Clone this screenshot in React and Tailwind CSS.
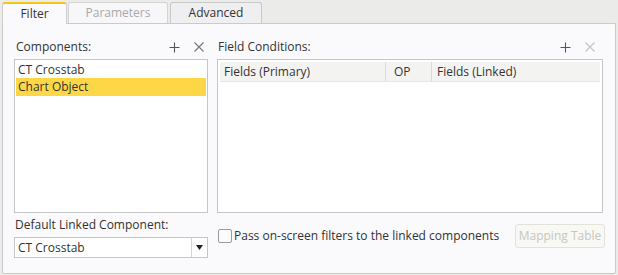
import React from 'react';

const FONT = { fontFamily: '"Open Sans", "Liberation Sans", sans-serif' };

const PlusIcon = ({ className }) => (
    <svg width="11" height="11" viewBox="0 0 11 11" className={className}>
        <path d="M5.5 0.5v10M0.5 5.5h10" stroke="currentColor" strokeWidth="1.1" fill="none" />
    </svg>
);

const CrossIcon = ({ className }) => (
    <svg width="10" height="10" viewBox="0 0 10 10" className={className}>
        <path d="M0.5 0.5l9 9M9.5 0.5l-9 9" stroke="currentColor" strokeWidth="1.1" fill="none" />
    </svg>
);

const App = () => {
    return (
        <div className="w-[618px] h-[275px] bg-[#ebece9] text-[12px] text-[#333] overflow-hidden" style={FONT}>
            {/* tabs */}
            <div className="flex items-end h-[23px] pl-[2px] gap-[1px]">
                <div className="w-[65px] h-[22px] bg-[#faf9fb] border-t-2 border-t-[#f5c518] border-x border-x-[#cfcfcf] rounded-t-[3px] flex items-center justify-center relative top-[1px]">
                    Filter
                </div>
                <div className="w-[100px] h-[21px] bg-[#f7f6f8] border border-b-0 border-[#d4d4d4] rounded-t-[3px] flex items-center justify-center text-[#a9a9a9]">
                    Parameters
                </div>
                <div className="w-[92px] h-[21px] ml-[1px] bg-[#efeef1] border border-b-0 border-[#c8c8c8] rounded-t-[3px] flex items-center justify-center text-[#333]">
                    Advanced
                </div>
            </div>

            {/* panel */}
            <div className="ml-[2px] w-[614px] h-[251px] bg-[#faf9fb] border border-[#cacaca] rounded-b-[2px] pt-[15px] px-[11px] flex gap-[9px]">
                {/* left column */}
                <div className="w-[194px] flex flex-col">
                    <div className="flex items-center h-[16px] pl-[2px] pr-[4px]">
                        <span className="flex-1">Components:</span>
                        <PlusIcon className="text-[#555] mr-[14px]" />
                        <CrossIcon className="text-[#777]" />
                    </div>
                    <div className="mt-[4px] h-[154px] bg-white border border-[#c6c6c6] p-[1px]">
                        <div className="h-[17px] leading-[17px] pl-[2px]">CT Crosstab</div>
                        <div className="h-[18px] leading-[18px] pl-[2px] bg-[#fdd746]">Chart Object</div>
                    </div>
                    <div className="mt-[4px] h-[16px] leading-[16px] pl-[1px]">Default Linked Component:</div>
                    <div className="mt-[4px] h-[21px] bg-white border border-[#c6c6c6] flex items-stretch">
                        <div className="flex-1 pl-[3px] flex items-center">CT Crosstab</div>
                        <div className="w-[16px] border-l border-[#d6d6d6] flex items-center justify-center">
                            <svg width="7" height="5" viewBox="0 0 7 5">
                                <path d="M0 0h7L3.5 5z" fill="#222" />
                            </svg>
                        </div>
                    </div>
                </div>

                {/* right column */}
                <div className="w-[386px] flex flex-col">
                    <div className="flex items-center h-[16px] pl-[1px] pr-[8px]">
                        <span className="flex-1">Field Conditions:</span>
                        <PlusIcon className="text-[#555] mr-[14px]" />
                        <CrossIcon className="text-[#c4c4c4]" />
                    </div>
                    <div className="mt-[4px] h-[154px] bg-white border border-[#c6c6c6] p-[2px]">
                        <div className="flex h-[20px] bg-[#f3f4f2] border-b border-[#e6e6e6]">
                            <div className="w-[166px] pl-[4px] flex items-center border-r border-[#dadada]">Fields (Primary)</div>
                            <div className="w-[46px] pl-[8px] flex items-center border-r border-[#dadada]">OP</div>
                            <div className="flex-1 pl-[5px] flex items-center">Fields (Linked)</div>
                        </div>
                    </div>
                    <div className="mt-[11px] flex items-center">
                        <div className="w-[14px] h-[14px] bg-[#fbfbfb] border border-[#9a9a9a] rounded-[2px] ml-[1px]" />
                        <span className="ml-[2px] flex-1 whitespace-nowrap">Pass on-screen filters to the linked components</span>
                        <div className="w-[90px] h-[24px] border border-[#e2e2da] bg-[#f8f8f4] rounded-[3px] flex items-center justify-center text-[#c7c7bf] mr-[-2px]">
                            Mapping Table
                        </div>
                    </div>
                </div>
            </div>
        </div>
    );
};

export default App;
